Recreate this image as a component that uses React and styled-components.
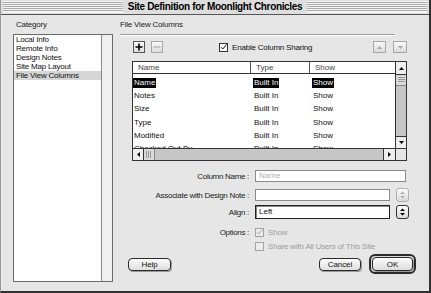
import React from 'react';
import styled, { createGlobalStyle } from 'styled-components';

const GlobalStyle = createGlobalStyle`
  html, body {
    margin: 0;
    padding: 0;
    background: #e6e6e6;
  }
  body {
    font-family: "Liberation Sans", Arial, sans-serif;
    font-size: 8px;
    color: #111;
  }
`;

const Window = styled.div`
  width: 431px;
  height: 293px;
  box-sizing: border-box;
  background: #e6e6e6;
  border-left: 1px solid #9a9a9a;
  border-right: 2px solid #303030;
  border-bottom: 2px solid #303030;
  display: flex;
  flex-direction: column;
  overflow: hidden;
`;

const TitleBar = styled.div`
  height: 14px;
  flex: none;
  display: flex;
  align-items: center;
  padding: 0 2px;
  border-bottom: 1px solid #555;
  background: #dedede;
`;

const Stripes = styled.div`
  flex: 1;
  height: 11px;
  background: repeating-linear-gradient(to bottom, #f6f6f6 0 1px, #a9a9a9 1px 2px);
  border-bottom: 1px solid #f6f6f6;
`;

const Title = styled.div`
  padding: 0 5px;
  font-size: 10px;
  font-weight: bold;
  letter-spacing: -0.35px;
  color: #000;
  line-height: 14px;
`;

const Body = styled.div`
  flex: 1;
  display: flex;
`;

const Sidebar = styled.div`
  width: 107px;
  flex: none;
  padding-left: 12px;
  display: flex;
  flex-direction: column;
`;

const Heading = styled.div`
  height: 19px;
  line-height: 20px;
  padding-left: ${p => p.$indent || 0}px;
  letter-spacing: -0.2px;
  color: #222;
`;

const ListBox = styled.div`
  width: 100px;
  height: 248px;
  box-sizing: border-box;
  border: 1px solid #6a6a6a;
  background: #fff;
  display: flex;
`;

const ListItems = styled.div`
  flex: 1;
`;

const ListItem = styled.div`
  height: 9px;
  line-height: 9px;
  padding-left: 2px;
  letter-spacing: -0.2px;
  background: ${p => (p.$active ? '#d6d6d6' : 'transparent')};
`;

const ListScroll = styled.div`
  width: 10px;
  border-left: 1px solid #8a8a8a;
  background: #efefef;
`;

const Main = styled.div`
  flex: 1;
  display: flex;
  flex-direction: column;
  padding-right: 13px;
`;

const Separator = styled.div`
  width: 275px;
  height: 1px;
  background: #9c9c9c;
  box-shadow: 0 1px 0 #fff;
`;

const Toolbar = styled.div`
  margin-top: 6px;
  margin-left: 13px;
  width: 274px;
  height: 12px;
  display: flex;
  align-items: center;
`;

const SquareButton = styled.div`
  width: ${p => p.$w || 12}px;
  height: 12px;
  box-sizing: border-box;
  margin-left: ${p => p.$ml || 0}px;
  border: 1px solid ${p => (p.$disabled ? '#a6a6a6' : '#555')};
  background: linear-gradient(#fafafa, #dcdcdc);
  display: flex;
  align-items: center;
  justify-content: center;
  flex: none;
`;

const CheckGroup = styled.label`
  display: flex;
  align-items: center;
  margin-left: ${p => p.$ml || 0}px;
  color: ${p => (p.$disabled ? '#9d9d9d' : '#111')};
  letter-spacing: -0.2px;
`;

const Box = styled.span`
  width: 9px;
  height: 9px;
  box-sizing: border-box;
  border: 1px solid ${p => (p.$disabled ? '#a3a3a3' : '#333')};
  background: ${p => (p.$disabled ? '#ececec' : '#fff')};
  margin-right: 4px;
  display: flex;
  align-items: center;
  justify-content: center;
  flex: none;
`;

const Spacer = styled.div`
  flex: 1;
`;

const Table = styled.div`
  margin-top: 8px;
  margin-left: 12px;
  width: 275px;
  height: 100px;
  box-sizing: border-box;
  border: 1px solid #333;
  display: grid;
  grid-template-columns: 1fr 11px;
  grid-template-rows: 1fr 12px;
  background: #fff;
`;

const Grid = styled.div`
  overflow: hidden;
  display: flex;
  flex-direction: column;
`;

const HeaderRow = styled.div`
  display: grid;
  grid-template-columns: 118px 59px 1fr;
  height: 11px;
  flex: none;
  border-bottom: 1px solid #333;
`;

const HeaderCell = styled.div`
  padding-left: 5px;
  line-height: 11px;
  color: #444;
  border-right: ${p => (p.$last ? 'none' : '1px solid #555')};
`;

const Rows = styled.div`
  padding-top: 2px;
`;

const Row = styled.div`
  display: grid;
  grid-template-columns: 119px 59px 1fr;
  height: 13.2px;
  line-height: 13px;
`;

const Cell = styled.div`
  padding-left: ${p => p.$pad}px;
  white-space: nowrap;
`;

const Selected = styled.span`
  background: #000;
  color: #fff;
  padding: 0 1px;
  margin-left: -1px;
  display: inline-block;
  line-height: 10px;
`;

const VScroll = styled.div`
  border-left: 1px solid #333;
  background: #c6c6c6;
  display: flex;
  flex-direction: column;
`;

const HScroll = styled.div`
  border-top: 1px solid #333;
  background: #c6c6c6;
  display: flex;
`;

const Arrow = styled.div`
  flex: none;
  width: ${p => p.$w || 'auto'};
  height: ${p => p.$h || 'auto'};
  background: #eeeeee;
  display: flex;
  align-items: center;
  justify-content: center;
  ${p => p.$edge}: 1px solid #333;
`;

const Thumb = styled.div`
  flex: none;
  width: ${p => p.$w || 'auto'};
  height: ${p => p.$h || 'auto'};
  background: #dadada;
  box-sizing: border-box;
  ${p => p.$edge}: 1px solid #888;
  display: flex;
  align-items: center;
  justify-content: center;
`;

const Corner = styled.div`
  border-left: 1px solid #333;
  border-top: 1px solid #333;
  background: #e6e6e6;
`;

const FormRow = styled.div`
  margin-top: ${p => p.$gap}px;
  height: 14px;
  display: flex;
  align-items: center;
`;

const Label = styled.div`
  width: 129px;
  margin-right: 6px;
  text-align: right;
  letter-spacing: -0.3px;
  color: #222;
  flex: none;
`;

const Input = styled.div`
  width: ${p => p.$w}px;
  height: ${p => (p.$strong ? 14 : 12)}px;
  box-sizing: border-box;
  border: 1px solid ${p => (p.$strong ? '#222' : '#8a8a8a')};
  box-shadow: ${p => (p.$strong ? 'inset 1px 1px 0 #888' : 'none')};
  background: #fff;
  padding-left: 3px;
  line-height: ${p => (p.$strong ? 12 : 10)}px;
  color: ${p => (p.$placeholder ? '#b0b0b0' : '#111')};
  flex: none;
`;

const Stepper = styled.div`
  width: 13px;
  height: 14px;
  box-sizing: border-box;
  margin-left: 6px;
  border: 1px solid ${p => (p.$disabled ? '#b0b0b0' : '#333')};
  border-radius: 3px;
  background: linear-gradient(#fafafa, #dadada);
  display: flex;
  align-items: center;
  justify-content: center;
  flex: none;
`;

const ButtonRow = styled.div`
  margin-top: 1px;
  height: 20px;
  display: flex;
  align-items: center;
  padding-left: 8px;
`;

const Button = styled.div`
  width: ${p => p.$w}px;
  height: ${p => p.$h || 13}px;
  box-sizing: border-box;
  border: 1px solid #2a2a2a;
  border-radius: 4px;
  background: linear-gradient(#fbfbfb, #dedede);
  box-shadow: 1px 1px 0 #9a9a9a;
  margin-right: ${p => p.$mr || 0}px;
  display: flex;
  align-items: center;
  justify-content: center;
  letter-spacing: -0.1px;
  flex: none;
`;

const DefaultRing = styled.div`
  padding: 1px;
  border: 2px solid #2a2a2a;
  border-radius: 6px;
  background: #d8d8d8;
  display: flex;
`;

function Triangle({ dir, color = '#000', size = 5 }) {
  const pts = {
    up: '0,4 5,4 2.5,1',
    down: '0,1 5,1 2.5,4',
    left: '4,0 4,5 1,2.5',
    right: '1,0 1,5 4,2.5',
  }[dir];
  return (
    <svg width={size} height={size} viewBox="0 0 5 5">
      <polygon points={pts} fill={color} />
    </svg>
  );
}

function Check({ color }) {
  return (
    <svg width="9" height="9" viewBox="0 0 9 9">
      <path d="M1.5 4.2 L3.5 6.5 L8.5 0.5" fill="none" stroke={color} strokeWidth="1.2" />
    </svg>
  );
}

function StepIcon({ color }) {
  return (
    <svg width="5" height="8" viewBox="0 0 5 8">
      <polygon points="0,3 5,3 2.5,0.5" fill={color} />
      <polygon points="0,5 5,5 2.5,7.5" fill={color} />
    </svg>
  );
}

function Grip({ vertical }) {
  return vertical ? (
    <svg width="7" height="6" viewBox="0 0 7 6">
      <path d="M0 0.5h7M0 2.5h7M0 4.5h7" stroke="#999" strokeWidth="1" />
    </svg>
  ) : (
    <svg width="6" height="7" viewBox="0 0 6 7">
      <path d="M0.5 0v7M2.5 0v7M4.5 0v7" stroke="#999" strokeWidth="1" />
    </svg>
  );
}

const categories = ['Local Info', 'Remote Info', 'Design Notes', 'Site Map Layout', 'File View Columns'];

const columns = [
  { name: 'Name', type: 'Built In', show: 'Show', selected: true },
  { name: 'Notes', type: 'Built In', show: 'Show' },
  { name: 'Size', type: 'Built In', show: 'Show' },
  { name: 'Type', type: 'Built In', show: 'Show' },
  { name: 'Modified', type: 'Built In', show: 'Show' },
  { name: 'Checked Out By', type: 'Built In', show: 'Show' },
];

function Value({ selected, children }) {
  return selected ? <Selected>{children}</Selected> : children;
}

export default function App() {
  return (
    <>
      <GlobalStyle />
      <Window>
        <TitleBar>
          <Stripes />
          <Title>Site Definition for Moonlight Chronicles</Title>
          <Stripes />
        </TitleBar>
        <Body>
          <Sidebar>
            <Heading $indent={3}>Category</Heading>
            <ListBox>
              <ListItems>
                {categories.map(c => (
                  <ListItem key={c} $active={c === 'File View Columns'}>{c}</ListItem>
                ))}
              </ListItems>
              <ListScroll />
            </ListBox>
          </Sidebar>
          <Main>
            <Heading>File View Columns</Heading>
            <Separator />
            <Toolbar>
              <SquareButton>
                <svg width="8" height="8" viewBox="0 0 8 8">
                  <path d="M4 0.5v7M0.5 4h7" stroke="#000" strokeWidth="1.6" />
                </svg>
              </SquareButton>
              <SquareButton $ml={6} $disabled>
                <svg width="8" height="8" viewBox="0 0 8 8">
                  <path d="M0.5 4h7" stroke="#a0a0a0" strokeWidth="1" />
                </svg>
              </SquareButton>
              <CheckGroup $ml={56}>
                <Box><Check color="#000" /></Box>
                Enable Column Sharing
              </CheckGroup>
              <Spacer />
              <SquareButton $w={13} $disabled><Triangle dir="up" color="#a8a8a8" /></SquareButton>
              <SquareButton $w={14} $ml={7} $disabled><Triangle dir="down" color="#a8a8a8" /></SquareButton>
            </Toolbar>
            <Table>
              <Grid>
                <HeaderRow>
                  <HeaderCell>Name</HeaderCell>
                  <HeaderCell>Type</HeaderCell>
                  <HeaderCell $last>Show</HeaderCell>
                </HeaderRow>
                <Rows>
                  {columns.map(c => (
                    <Row key={c.name}>
                      <Cell $pad={1}><Value selected={c.selected}>{c.name}</Value></Cell>
                      <Cell $pad={2}><Value selected={c.selected}>{c.type}</Value></Cell>
                      <Cell $pad={2}><Value selected={c.selected}>{c.show}</Value></Cell>
                    </Row>
                  ))}
                </Rows>
              </Grid>
              <VScroll>
                <Arrow $h="12px" $edge="border-bottom"><Triangle dir="up" /></Arrow>
                <Thumb $h="11px" $edge="border-bottom"><Grip vertical /></Thumb>
                <Spacer />
                <Arrow $h="11px" $edge="border-top"><Triangle dir="down" /></Arrow>
              </VScroll>
              <HScroll>
                <Arrow $w="10px" $edge="border-right"><Triangle dir="left" /></Arrow>
                <Thumb $w="11px" $edge="border-right"><Grip /></Thumb>
                <Spacer />
                <Arrow $w="11px" $edge="border-left"><Triangle dir="right" /></Arrow>
              </HScroll>
              <Corner />
            </Table>
            <FormRow $gap={8}>
              <Label>Column Name :</Label>
              <Input $w={151} $placeholder>Name</Input>
            </FormRow>
            <FormRow $gap={5}>
              <Label>Associate with Design Note :</Label>
              <Input $w={135} />
              <Stepper $disabled><StepIcon color="#b0b0b0" /></Stepper>
            </FormRow>
            <FormRow $gap={3}>
              <Label>Align :</Label>
              <Input $w={135} $strong>Left</Input>
              <Stepper><StepIcon color="#000" /></Stepper>
            </FormRow>
            <FormRow $gap={6}>
              <Label>Options :</Label>
              <CheckGroup $disabled>
                <Box $disabled><Check color="#a3a3a3" /></Box>
                Show
              </CheckGroup>
            </FormRow>
            <FormRow $gap={0}>
              <Label />
              <CheckGroup $disabled>
                <Box $disabled />
                Share with All Users of This Site
              </CheckGroup>
            </FormRow>
            <ButtonRow>
              <Button $w={43}>Help</Button>
              <Spacer />
              <Button $w={42} $mr={8}>Cancel</Button>
              <DefaultRing>
                <Button $w={41} $h={14}>OK</Button>
              </DefaultRing>
            </ButtonRow>
          </Main>
        </Body>
      </Window>
    </>
  );
}
